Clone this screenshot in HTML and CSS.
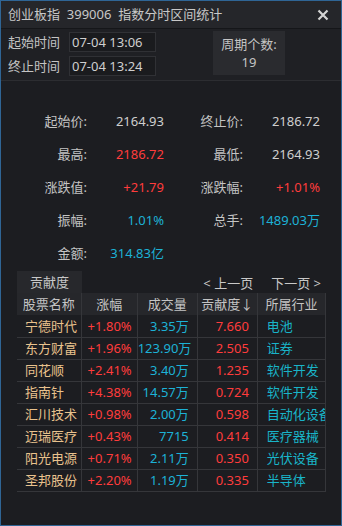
FILE: index.html
```html
<!DOCTYPE html>
<html lang="zh">
<head>
    <meta charset="UTF-8">
    <title>指数分时区间统计</title>
    <link rel="stylesheet" href="styles.css">
</head>
<body>
    <div class="window">
        <div class="titlebar">
            <span class="title">创业板指&nbsp;&nbsp;399006&nbsp;&nbsp;指数分时区间统计</span>
            <svg class="close" width="12" height="12" viewBox="0 0 12 12">
                <path d="M1.5 1.5 L10.5 10.5 M10.5 1.5 L1.5 10.5" stroke="#d4d4d4" stroke-width="2.2" fill="none"/>
            </svg>
        </div>

        <div class="timebar">
            <div class="times">
                <div class="time-row">
                    <span class="time-label">起始时间</span>
                    <div class="time-box">07-04 13:06</div>
                </div>
                <div class="time-row">
                    <span class="time-label">终止时间</span>
                    <div class="time-box">07-04 13:24</div>
                </div>
            </div>
            <div class="period">
                <div>周期个数:</div>
                <div>19</div>
            </div>
        </div>

        <div class="stats">
            <span class="lbl">起始价:</span><span class="val">2164.93</span>
            <span class="lbl">终止价:</span><span class="val">2186.72</span>

            <span class="lbl">最高:</span><span class="val up">2186.72</span>
            <span class="lbl">最低:</span><span class="val">2164.93</span>

            <span class="lbl">涨跌值:</span><span class="val up">+21.79</span>
            <span class="lbl">涨跌幅:</span><span class="val up">+1.01%</span>

            <span class="lbl">振幅:</span><span class="val cyan">1.01%</span>
            <span class="lbl">总手:</span><span class="val cyan">1489.03万</span>

            <span class="lbl">金额:</span><span class="val cyan">314.83亿</span>
        </div>

        <div class="contrib">
            <div class="contrib-top">
                <div class="tab">贡献度</div>
                <div class="pager">
                    <span>&lt; 上一页</span>
                    <span>下一页 &gt;</span>
                </div>
            </div>
            <table class="grid">
                <colgroup>
                    <col style="width:64px"><col style="width:56px"><col style="width:60px"><col style="width:60px"><col style="width:68px">
                </colgroup>
                <thead>
                    <tr><th>股票名称</th><th>涨幅</th><th>成交量</th><th>贡献度↓</th><th>所属行业</th></tr>
                </thead>
                <tbody>
                    <tr><td class="name">宁德时代</td><td class="chg">+1.80%</td><td class="vol">3.35万</td><td class="ctb">7.660</td><td class="ind">电池</td></tr>
                    <tr><td class="name">东方财富</td><td class="chg">+1.96%</td><td class="vol">123.90万</td><td class="ctb">2.505</td><td class="ind">证券</td></tr>
                    <tr><td class="name">同花顺</td><td class="chg">+2.41%</td><td class="vol">3.40万</td><td class="ctb">1.235</td><td class="ind">软件开发</td></tr>
                    <tr><td class="name">指南针</td><td class="chg">+4.38%</td><td class="vol">14.57万</td><td class="ctb">0.724</td><td class="ind">软件开发</td></tr>
                    <tr><td class="name">汇川技术</td><td class="chg">+0.98%</td><td class="vol">2.00万</td><td class="ctb">0.598</td><td class="ind">自动化设备</td></tr>
                    <tr><td class="name">迈瑞医疗</td><td class="chg">+0.43%</td><td class="vol">7715</td><td class="ctb">0.414</td><td class="ind">医疗器械</td></tr>
                    <tr><td class="name">阳光电源</td><td class="chg">+0.71%</td><td class="vol">2.11万</td><td class="ctb">0.350</td><td class="ind">光伏设备</td></tr>
                    <tr><td class="name">圣邦股份</td><td class="chg">+2.20%</td><td class="vol">1.19万</td><td class="ctb">0.335</td><td class="ind">半导体</td></tr>
                </tbody>
            </table>
        </div>
    </div>
</body>
</html>
```

FILE: styles.css
```css
* { margin: 0; padding: 0; box-sizing: border-box; }
body { background: #1c1d21; font-family: "Noto Sans", "Noto Sans CJK SC", sans-serif; font-size: 13px; color: #c4c4c4; }

.window { width: 342px; height: 526px; border: 1px solid #2f6595; background: #1c1d21; overflow: hidden; }

.titlebar { height: 28px; background: #25262a; border-bottom: 1px solid #151619; display: flex; align-items: center; justify-content: space-between; padding: 0 12px 0 7px; }
.title { color: #c8c8c8; line-height: 27px; }
.close { display: block; }

.timebar { height: 52px; background: #1f2024; border-bottom: 1px solid #2c2d31; display: flex; align-items: flex-start; }
.times { padding: 3px 0 0 7px; display: flex; flex-direction: column; gap: 4px; }
.time-row { display: flex; align-items: center; }
.time-label { width: 61px; line-height: 20px; color: #c4c4c4; }
.time-box { width: 87px; height: 20px; border: 1px solid #303135; background: #1a1b1e; padding-left: 2px; line-height: 18px; color: #cfcfcf; }
.period { margin: 2px 0 0 57px; width: 72px; height: 44px; background: #2a2b2f; display: flex; flex-direction: column; align-items: center; justify-content: center; line-height: 18px; color: #c4c4c4; }

.stats { display: grid; grid-template-columns: 86px 77px 79px 77px; grid-auto-rows: 33px; padding-top: 23px; align-items: center; }
.stats span { text-align: right; line-height: 18px; }
.lbl { color: #c4c4c4; }
.val { color: #cfcfcf; }
.up { color: #ff3c3c; }
.cyan { color: #1cb2d6; }

.contrib { margin: 2px 0 0 16px; width: 309px; }
.contrib-top { display: flex; justify-content: space-between; align-items: center; height: 22px; }
.tab { width: 65px; height: 22px; background: #27282c; text-align: center; line-height: 22px; color: #c8c8c8; }
.pager { display: flex; gap: 18px; padding-right: 5px; color: #c8c8c8; }

.grid { border-collapse: collapse; table-layout: fixed; width: 309px; }
.grid th, .grid td { height: 22px; border-bottom: 1px solid #35363a; border-right: 1px solid #35363a; white-space: nowrap; overflow: hidden; line-height: 20px; font-weight: normal; }
.grid th { background: #26272b; color: #c4c4c4; text-align: center; border-bottom: none; }
.grid td.name { color: #e9c28d; padding-left: 8px; }
.grid td.chg { color: #ff3c3c; padding-left: 6px; }
.grid td.vol { color: #1cb2d6; text-align: right; padding-right: 8px; }
.grid td.ctb { color: #ff3c3c; text-align: right; padding-right: 8px; }
.grid td.ind { color: #19b4c8; padding-left: 9px; text-overflow: clip; }
```
